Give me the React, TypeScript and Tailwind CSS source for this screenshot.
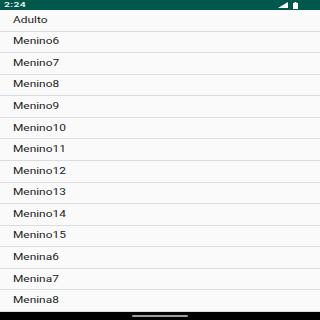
const items = [
  "Adulto",
  "Menino6",
  "Menino7",
  "Menino8",
  "Menino9",
  "Menino10",
  "Menino11",
  "Menino12",
  "Menino13",
  "Menino14",
  "Menino15",
  "Menina6",
  "Menina7",
  "Menina8",
]

function StatusBar() {
  return (
    <div className="h-[10px] bg-[#00574B] flex items-center justify-between pl-[4px] pr-[22px]">
      <span
        className="text-white text-[8px] leading-none font-medium inline-block origin-left scale-x-[1.3] tracking-[0.3px]"
        style={{ fontFamily: "Roboto, 'Liberation Sans', sans-serif" }}
      >
        2:24
      </span>
      <div className="flex items-center gap-[5px]">
        <svg width="10" height="6" viewBox="0 0 10 6">
          <polygon points="0,6 10,0 10,6" fill="#fff" />
        </svg>
        <svg width="5" height="7" viewBox="0 0 5 7">
          <rect x="1.5" y="0" width="2" height="1" fill="#fff" />
          <rect x="0" y="1" width="5" height="6" fill="#fff" />
        </svg>
      </div>
    </div>
  )
}

export default function App() {
  return (
    <div
      className="w-[320px] h-[320px] bg-[#FAFAFA] flex flex-col overflow-hidden"
      style={{ fontFamily: "Roboto, 'Liberation Sans', sans-serif" }}
    >
      <StatusBar />
      <div className="flex flex-col">
        {items.map((name) => (
          <div
            key={name}
            className="h-[21.57px] border-b border-[#DCDCDC] flex items-center pl-[13px] shrink-0"
          >
            <span className="text-[9px] leading-none text-[#212121] inline-block origin-left scale-x-[1.32]">
              {name}
            </span>
          </div>
        ))}
      </div>
      <div className="flex-1 bg-black flex items-center justify-center">
        <div className="w-[56px] h-[2px] rounded-full bg-[#9E9E9E]" />
      </div>
    </div>
  )
}
